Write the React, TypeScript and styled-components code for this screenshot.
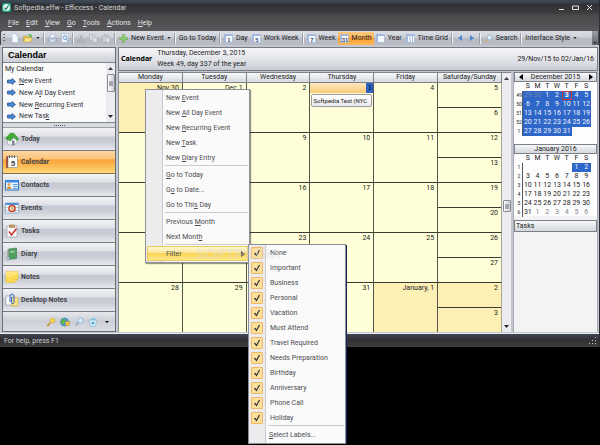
import React from 'react';
import styled, { createGlobalStyle, css } from 'styled-components';

const GlobalStyle = createGlobalStyle`
  *, *::before, *::after { box-sizing: border-box; }
  html, body { margin: 0; background: #000; }
  body { font: 7px/10px Roboto, "Liberation Sans", sans-serif; color: #1c1c24; }
  button, input { font: inherit; color: inherit; margin: 0; padding: 0; border: 0; background: none; }
  button { cursor: default; }
  svg { display: block; flex: none; }
  table { border-spacing: 0; border-collapse: separate; table-layout: fixed; width: 100%; }
  th, td { padding: 0; font-weight: 400; }
  u { text-underline-offset: 1px; text-decoration-thickness: 1px; }
`;

/* ---------- window frame ---------- */

const Desktop = styled.div`
  position: relative;
  min-height: 100vh;
  background: #000;
`;

const Window = styled.div`
  background: #48484b;
  border-right: 1px solid #2c2d33;
`;

const TitleBar = styled.header`
  display: flex;
  align-items: center;
  gap: 3px;
  height: 15px;
  padding: 0 5px 0 2px;
  color: #d5d5d5;
  background: linear-gradient(#3d4a57 0, #38424c 3px, #2f3033 4px, #37373a 10px, #454547 15px);
`;

const Title = styled.h1`
  margin: 0;
  flex: 1;
  font-size: 7px;
  font-weight: 400;
`;

const CaptionButtons = styled.div`
  display: flex;
  gap: 5px;
`;

const CaptionButton = styled.button`
  display: grid;
  place-items: center;
  width: 9px;
  height: 10px;
  color: #e4e4e4;
`;

const MenuBar = styled.nav`
  display: flex;
  gap: 7px;
  height: 16px;
  padding: 0 8px;
  align-items: center;
  color: #e2e2e2;
  background: linear-gradient(#4a4a4c, #58585a);
`;

const MenuButton = styled.button`
  line-height: 12px;
`;

const ToolBar = styled.div`
  display: flex;
  align-items: center;
  height: 14px;
  margin: 0 1px;
  padding-left: 2px;
  background: linear-gradient(#dcdee4 0, #cdd0d8 45%, #b8bbc4 50%, #b9bcc5 100%);
  border-radius: 2px 2px 0 0;
`;

const Grip = styled.span`
  width: 2px;
  height: 9px;
  margin-right: 4px;
  background: repeating-linear-gradient(#6c7078 0 1px, transparent 1px 3px);
`;

const ToolButton = styled.button<{ $active?: boolean; $roomy?: boolean }>`
  display: flex;
  align-items: center;
  gap: 3px;
  height: 13px;
  padding: 0 ${(p) => (p.$roomy ? 4 : 2)}px;
  white-space: nowrap;
  ${(p) =>
    p.$active &&
    css`
      background: linear-gradient(#fdc981, #fbb457 45%, #f99f2d 50%, #fcb85c);
    `}
`;

const Divider = styled.span`
  width: 1px;
  height: 11px;
  margin: 0 1px;
  background: #eef0f4;
  border-left: 1px solid #9a9da6;
  box-sizing: content-box;
`;

const Spacer = styled.span`
  flex: 1;
`;

const Overflow = styled.button`
  display: grid;
  place-items: end center;
  width: 6px;
  height: 14px;
  padding-bottom: 1px;
  background: linear-gradient(#9a9da6, #62656e);
`;

const Body = styled.main`
  display: flex;
  gap: 2px;
  padding: 2px 1px 1px 2px;
  background: #c3c7d0;
  border-bottom: 1px solid #e8eaee;
`;

const StatusBar = styled.footer`
  display: flex;
  align-items: center;
  justify-content: space-between;
  height: 13px;
  padding: 0 2px 0 4px;
  color: #d0d0d0;
  background: linear-gradient(#414652, #33363e 4px, #303032 6px, #3e3e40);
`;

/* ---------- sidebar ---------- */

const Sidebar = styled.aside`
  flex: none;
  display: flex;
  flex-direction: column;
  width: 114px;
  border: 1px solid #6a6d76;
  background: #fafafb;
`;

const SideHeader = styled.h2`
  margin: 0;
  height: 15px;
  padding-left: 5px;
  font: bold 9px/15px "Liberation Sans", sans-serif;
  color: #000;
  background: linear-gradient(#f6f7f8, #dcdee3 60%, #cdd0d7);
  border-bottom: 1px solid #80848c;
`;

const SideList = styled.div`
  display: flex;
  height: 60px;
  border-bottom: 1px solid #80848c;
`;

const Links = styled.div`
  flex: 1;
  display: flex;
  flex-direction: column;
  padding-left: 2px;
  overflow: hidden;
`;

const LinksTitle = styled.div`
  height: 13px;
  line-height: 12px;
`;

const SideLink = styled.a`
  display: flex;
  align-items: center;
  gap: 3px;
  height: 12px;
  padding-left: 2px;
  font-family: Roboto, "Liberation Sans", sans-serif;
  color: #33333b;
  text-decoration: none;
`;

const Scroll = styled.div`
  display: flex;
  flex-direction: column;
  align-items: center;
  width: 9px;
  padding: 4px 0;
  background: #ececf0;
`;

const Thumb = styled.span<{ $month?: boolean }>`
  width: 8px;
  height: ${(p) => (p.$month ? 12 : 18)}px;
  margin-top: ${(p) => (p.$month ? 120 : 4)}px;
  margin-bottom: auto;
  border: 1px solid #888b92;
  border-radius: 1px;
  background: linear-gradient(90deg, #fff, #c9ccd2);
  display: grid;
  place-items: center;

  &::after {
    content: "";
    width: 4px;
    height: 5px;
    background: #a4a7ae;
  }
`;

const Splitter = styled.div`
  height: 5px;
  display: grid;
  place-items: center;
  background: #d8dae0;
  border-bottom: 1px solid #9b9ea6;

  &::after {
    content: "";
    width: 11px;
    height: 1px;
    background: repeating-linear-gradient(90deg, #50535b 0 1px, transparent 1px 2px);
  }
`;

const NavButton = styled.button<{ $active?: boolean }>`
  display: flex;
  align-items: center;
  gap: 2px;
  height: 23px;
  padding-left: 2px;
  text-align: left;
  font: bold 7px/10px Roboto, "Liberation Sans", sans-serif;
  color: #43454d;
  border-bottom: 1px solid ${(p) => (p.$active ? '#8d6b3a' : '#777a83')};
  background: ${(p) =>
    p.$active
      ? 'linear-gradient(#fcd9a4 0, #fbc277 36%, #f9a53a 40%, #fcb64e 65%, #fdda80)'
      : 'linear-gradient(#f2f3f5 0, #dfe1e6 36%, #c6c9d1 42%, #cbced6 65%, #e6e8ec)'};
`;

const SideFooter = styled.div`
  display: flex;
  align-items: center;
  justify-content: flex-end;
  gap: 4px;
  flex: 1;
  min-height: 18px;
  padding-right: 3px;
  background: linear-gradient(#e6e8ec, #cbced6 50%, #dddfe4);
`;

const IconButton = styled.button`
  display: grid;
  place-items: center;
  width: 10px;
  height: 12px;
`;

/* ---------- calendar ---------- */

const Main = styled.section`
  flex: 1;
  min-width: 0;
  display: flex;
  flex-direction: column;
`;

const CalendarHeader = styled.header`
  display: flex;
  align-items: center;
  gap: 5px;
  height: 24px;
  padding: 0 3px 0 2px;
  border: 1px solid #777a83;
  background: linear-gradient(#f7f7f9, #dfe1e6 60%, #c9ccd3);
`;

const CalendarTitle = styled.h2`
  margin: 0;
  font: bold 7px/10px "Noto Sans", sans-serif;
  color: #000;
`;

const DateInfo = styled.div`
  flex: 1;
  line-height: 11px;
`;

const Columns = styled.div`
  flex: 1;
  display: flex;
  gap: 2px;
  padding-top: 1px;
`;

const MonthPane = styled.div`
  flex: 1;
  display: flex;
  border-left: 1px solid #8b8f98;
  border-top: 1px solid #80848c;
`;

const MonthTable = styled.table`
  flex: 1;
  width: 0;
`;

const DayHead = styled.th`
  height: 10px;
  line-height: 9px;
  border-right: 1px solid #7d8088;
  border-bottom: 1px solid #7d8088;
  background: linear-gradient(#f7f8f9, #d7dae0);
`;

const dayTone = { plain: '#feffd8', other: '#fcf0b4' };

const DayCell = styled.td<{ $other?: boolean }>`
  height: 50px;
  vertical-align: top;
  text-align: right;
  border-right: 1px solid #55564b;
  border-bottom: 1px solid #3a3b33;
  background: ${(p) => (p.$other ? dayTone.other : dayTone.plain)};

  &:last-child { border-right-color: #a5a79a; }
  tr:last-child > & { border-bottom: 0; height: 49px; }
`;

const DayNumber = styled.div`
  padding-right: 3px;
  line-height: 10px;
`;

const HalfDay = styled.div`
  height: 24px;
  & + & { border-top: 1px solid #3a3b33; }
`;

const TodayBar = styled.div`
  height: 10px;
  display: flex;
  justify-content: flex-end;
  line-height: 10px;
  background: linear-gradient(#fdeac0, #f9c877);
`;

const TodayNumber = styled.span`
  width: 7px;
  text-align: center;
  color: #10204c;
  background: #2f63c4;
`;

const Appointment = styled.button`
  display: block;
  width: calc(100% - 2px);
  height: 13px;
  margin: 1px 1px 0;
  padding-left: 1px;
  font-size: 6px;
  text-align: left;
  white-space: nowrap;
  border: 1px solid #9a9aa0;
  border-radius: 2px;
  background: linear-gradient(#fff, #e9e9ec);
`;

/* ---------- right pane ---------- */

const RightPane = styled.aside`
  flex: none;
  display: flex;
  flex-direction: column;
  width: 85px;
  background: #f3f3f4;
  border-right: 1px solid #a8abb3;
  border-left: 1px solid #a8abb3;
`;

const MiniMonth = styled.section`
  background: #fdfdfd;
  height: 72px;
`;

const PaneHeader = styled.h3<{ $left?: boolean }>`
  display: flex;
  align-items: center;
  justify-content: ${(p) => (p.$left ? 'flex-start' : 'space-between')};
  margin: 0;
  height: ${(p) => (p.$left ? 12 : 10)}px;
  padding: 0 ${(p) => (p.$left ? 1 : 3)}px;
  font-size: 7px;
  font-weight: 400;
  border: 1px solid #7d8088;
  background: linear-gradient(#f7f8f9, #d3d6dc);
`;

const PaneTitle = styled.span`
  flex: 1;
  text-align: center;
`;

const ArrowButton = styled.button`
  display: grid;
  place-items: center;
  width: 5px;
  height: 8px;
`;

const MiniTable = styled.table`
  line-height: 9px;
  text-align: center;
  margin: 0 6px 0 2px;
  width: calc(100% - 8px);

  tbody td, tbody th, thead th { height: 9px; }
  col:first-child { width: 7px; }
`;

const WeekNo = styled.th`
  font-size: 5px;
  border-right: 1px solid #55585f;
`;

const MiniDay = styled.td<{ $tone?: Tone }>`
  ${(p) => p.$tone === 'sel' && css`background: #2f67c9; color: #eef3ff;`}
  ${(p) => p.$tone === 'past' && css`background: #2f67c9; color: #6e85b5;`}
  ${(p) => p.$tone === 'today' && css`background: #2f67c9; color: #fff; font-weight: 700; box-shadow: inset 0 0 0 1px #c03a3c;`}
  ${(p) => p.$tone === 'dim' && css`color: #85878d;`}
`;

const TasksPane = styled.section`
  flex: 1;
  display: flex;
  flex-direction: column;
  margin-top: 4px;
`;

/* ---------- pop-up menus ---------- */

const Popup = styled.div<{ $sub?: boolean }>`
  position: absolute;
  display: flex;
  flex-direction: column;
  padding: 0 1px 1px;
  color: #4c4d52;
  border: 1px solid #8d8f94;
  background: linear-gradient(90deg, #ececee 0 16px, #c9cbd0 16px 17px, #fafafa 17px);
  ${(p) =>
    p.$sub
      ? css`left: 248px; top: 244px; width: 98px; box-shadow: 2px 0 0 -1px #12245c;`
      : css`left: 145px; top: 89px; width: 105px; box-shadow: 1px 1px 1px rgba(0, 0, 0, 0.4);`}
`;

const PopupItem = styled.button<{ $active?: boolean }>`
  display: flex;
  align-items: center;
  justify-content: space-between;
  height: 15px;
  padding: 0 3px 0 19px;
  text-align: left;
  ${(p) =>
    p.$active &&
    css`
      border: 1px solid #ecc95c;
      padding: 0 2px 0 18px;
      background: linear-gradient(#fff8d0, #fde79a 45%, #fbd453 50%, #fde98c);
    `}
`;

const PopupLine = styled.hr`
  width: calc(100% - 18px);
  height: 1px;
  margin: 0 0 1px auto;
  border: 0;
  background: #cbccd0;
`;

const CheckItem = styled.label`
  display: flex;
  align-items: center;
  gap: 7px;
  height: 15px;
  padding-left: 1px;
`;

const CheckCell = styled.span`
  display: grid;
  width: 12px;
  height: 12px;
  > * { grid-area: 1 / 1; place-self: center; }
  svg { pointer-events: none; position: relative; }
`;

const CheckInput = styled.input`
  appearance: none;
  width: 12px;
  height: 12px;
  border: 1px solid #f0b766;
  border-radius: 1px;
  background: #fde09a;
`;

const Watermark = styled.div`
  position: absolute;
  left: 195px;
  top: 246px;
  font: bold 15px/15px "Liberation Sans", sans-serif;
  color: rgba(255, 255, 255, 0.3);
  text-shadow: 0 0 1px rgba(120, 120, 110, 0.15);
  pointer-events: none;
`;

/* ---------- icons ---------- */

const Down = ({ small }: { small?: boolean }) => (
  <svg width={small ? 4 : 5} height={small ? 2 : 3} viewBox="0 0 5 3"><path d="M0 0h5L2.500 3z" fill="#26262c" /></svg>
);
const Up = () => (
  <svg width="5" height="3" viewBox="0 0 5 3"><path d="M0 3h5L2.500 0z" fill="#3a3c48" /></svg>
);
const Tri = ({ dir, color = '#000' }: { dir: 'l' | 'r'; color?: string }) => (
  <svg width="4" height="6" viewBox="0 0 4 6"><path d={dir === 'l' ? 'M4 0v6L0 3z' : 'M0 0v6l4-3z'} fill={color} /></svg>
);

const AppIcon = () => (
  <svg width="9" height="9" viewBox="0 0 18 18">
    <rect width="18" height="18" rx="3" fill="#1f9c7b" />
    <circle cx="9" cy="9" r="7" fill="#e9f7f2" />
    <path d="M5 9l3 4 5-8" fill="none" stroke="#178062" strokeWidth="2.500" />
  </svg>
);

const PageIcon = () => (
  <svg width="8" height="10" viewBox="0 0 16 20">
    <path d="M2 1h8l4 4v14H2z" fill="#f4f8ff" stroke="#a5b9d8" /><path d="M10 1v4h4" fill="#cfdcf0" stroke="#a5b9d8" />
  </svg>
);
const FolderIcon = () => (
  <svg width="10" height="10" viewBox="0 0 20 20">
    <path d="M1 6h6l2 2h7v9H1z" fill="#e6c25a" stroke="#b2913a" /><path d="M4 10h15l-4 8H1z" fill="#fbe58e" stroke="#b99a40" />
    <path d="M8 5c2-4 6-4 8-1l2-1-1 6-5-3 2-1c-1-2-3-2-6 0z" fill="#4fae3d" />
  </svg>
);
const PrintIcon = () => (
  <svg width="9" height="9" viewBox="0 0 18 18">
    <path d="M6 1h8l-2 7H4z" fill="#f8fbff" stroke="#9fb4cf" /><path d="M1 8h16v6H1z" fill="#c1cfe2" stroke="#8095b2" /><path d="M4 12h10v4H4z" fill="#eef3fa" stroke="#8ba0bd" />
  </svg>
);
const PreviewIcon = () => (
  <svg width="8" height="10" viewBox="0 0 16 20">
    <path d="M1 1h11l3 3v15H1z" fill="#eef5ff" stroke="#92aaca" /><circle cx="8" cy="9" r="4" fill="#cfe6fa" stroke="#6e8fba" strokeWidth="1.500" /><path d="M11 12l3 5" stroke="#6e8fba" strokeWidth="2" />
  </svg>
);
const CutIcon = () => (
  <svg width="8" height="9" viewBox="0 0 16 18" fill="none" stroke="#a4a7b0" strokeWidth="1.500">
    <path d="M5 1l5 10M11 1L6 11" /><circle cx="4" cy="14" r="2.500" /><circle cx="12" cy="14" r="2.500" />
  </svg>
);
const CopyIcon = () => (
  <svg width="9" height="9" viewBox="0 0 18 18" fill="#d9dbe1" stroke="#a4a7b0">
    <path d="M1 1h7l3 3v9H1z" /><path d="M7 6h6l3 3v8H7z" />
  </svg>
);
const PasteIcon = () => (
  <svg width="9" height="9" viewBox="0 0 18 18" fill="#cfd1d8" stroke="#a4a7b0">
    <path d="M1 3h13v13H1z" /><path d="M5 1h5v4H5z" /><path d="M8 8h8v9H8z" fill="#dfe1e6" />
  </svg>
);
const PlusIcon = () => (
  <svg width="9" height="9" viewBox="0 0 18 18"><path d="M7 1h4v6h6v4h-6v6H7v-6H1V7h6z" fill="#8fce72" stroke="#5da548" /></svg>
);
const ViewIcon = ({ label, bars }: { label?: string; bars?: boolean }) => (
  <svg width="9" height="9" viewBox="0 0 18 18">
    <rect x="1" y="1" width="16" height="16" fill="#f6f9ff" stroke="#8fa5cb" />
    <path d="M1 1h16v3H1zM1 1h3v16H1z" fill="#9db6de" />
    {bars && <path d="M8 4v13M13 4v13" stroke="#a9bbdc" strokeWidth="2" />}
    {label && <text x="10" y="15" textAnchor="middle" fontSize="12" fontWeight="700" fontFamily="Liberation Sans" fill="#3c5078">{label}</text>}
  </svg>
);
const SearchIcon = ({ handle = '#d6aa6c' }: { handle?: string }) => (
  <svg width="9" height="9" viewBox="0 0 18 18">
    <path d="M1 17l7-7" stroke={handle} strokeWidth="3" /><circle cx="11" cy="7" r="5" fill="#dcf0fc" stroke="#86a7c9" strokeWidth="1.500" />
  </svg>
);
const BlueArrow = () => (
  <svg width="9" height="7" viewBox="0 0 18 14"><path d="M1 4h9V1l7 6-7 6v-3H1z" fill="#4d8ad4" stroke="#1c4c90" strokeWidth="1.500" /></svg>
);

const navIcons: Record<string, React.ReactNode> = {
  Today: (<>
    <path d="M5 13v11l9 3 10-4V13z" fill="#f0f1f2" stroke="#8a9098" /><path d="M1 13L11 2l7 1 9 11-3 3-7-8-6 9z" fill="#3fae35" stroke="#1f7a20" /><path d="M14 17h5v9l-5 1z" fill="#7d8792" />
  </>),
  Calendar: (<>
    <path d="M3 4l3-2v22l-3 2z" fill="#b64a3c" stroke="#73332c" /><rect x="6" y="3" width="19" height="22" fill="#fbfbfb" stroke="#70747c" />
    <path d="M9 1v5M14 1v5M19 1v5" stroke="#555" strokeWidth="2" /><text x="16" y="21" textAnchor="middle" fontSize="15" fontWeight="700" fontFamily="Liberation Sans" fill="#3c3c42">5</text>
  </>),
  Contacts: (<>
    <rect x="1" y="5" width="26" height="19" fill="#e8f3ff" stroke="#2e77c8" strokeWidth="2" /><path d="M1 5h26v4H1z" fill="#3d8ee0" /><circle cx="8" cy="13" r="3" fill="#e2a25e" /><path d="M3 22c0-7 10-7 10 0z" fill="#d38c2c" /><path d="M16 13h9M16 17h9M16 21h9" stroke="#5a9ade" strokeWidth="2" />
  </>),
  Events: (<>
    <rect x="1" y="4" width="26" height="20" fill="#f3f8ff" stroke="#5d86bd" /><path d="M1 4h26v4H1z" fill="#4f8ed4" /><path d="M8 8v16M20 8v16M1 13h26M1 19h26" stroke="#74a6a0" /><circle cx="14" cy="15" r="6" fill="#fbe2c6" stroke="#d0452b" strokeWidth="3" /><path d="M14 12v4h3" stroke="#444" fill="none" />
  </>),
  Tasks: (<>
    <rect x="4" y="4" width="20" height="22" fill="#fafafa" stroke="#7c828c" /><path d="M9 2h10v5H9z" fill="#c9a05b" stroke="#85683a" /><path d="M8 15l5 7L23 9" fill="none" stroke="#d23030" strokeWidth="3" />
  </>),
  Diary: (<>
    <path d="M7 4l16-2v21l-16 2z" fill="#4f9e60" stroke="#2d6a3d" /><path d="M7 4l-2 2v20l2-1z" fill="#e9efe9" stroke="#6c7c70" /><path d="M11 8l8-1v4l-8 1z" fill="#9ad0a2" /><circle cx="6" cy="23" r="3" fill="#c8dbe8" stroke="#6487a0" />
  </>),
  Notes: (<>
    <path d="M2 3h24v16l-7 6H2z" fill="#fbd951" stroke="#e3b52c" /><path d="M26 19h-7v6z" fill="#fff3b2" stroke="#d9a826" /><path d="M2 3h24v5L2 16z" fill="#fde98a" opacity=".7" />
  </>),
  'Desktop Notes': (<>
    <rect x="2" y="6" width="15" height="18" fill="#f9fbff" stroke="#7a8798" /><rect x="13" y="9" width="13" height="17" fill="#fbe488" stroke="#c09c3a" /><path d="M10 18V6c0-5 8-5 8 0v13c0 3-5 3-5 0V8" fill="none" stroke="#2f62b8" strokeWidth="2" />
  </>),
};

const NavIcon = ({ name }: { name: string }) => (
  <svg width="14" height="14" viewBox="0 0 28 28">{navIcons[name]}</svg>
);

const CheckMark = () => (
  <svg width="8" height="8" viewBox="0 0 16 16"><path d="M3 8l4 5L13 2" fill="none" stroke="#33333a" strokeWidth="2.500" /></svg>
);

/* ---------- helpers and data ---------- */

const Mnemonic = ({ text }: { text: string }) => {
  const at = text.indexOf('&');
  if (at < 0) return <span>{text}</span>;
  return (
    <span>{text.slice(0, at)}<u>{text[at + 1]}</u>{text.slice(at + 2)}</span>
  );
};

type Tone = 'sel' | 'past' | 'today' | 'dim';

const menus = ['&File', '&Edit', '&View', '&Go', '&Tools', '&Actions', '&Help'];
const links = ['&New Event', 'New A&ll Day Event', 'New &Recurring Event', 'New Tas&k'];
const weekdays = ['Monday', 'Tuesday', 'Wednesday', 'Thursday', 'Friday', 'Saturday/Sunday'];
const weeks = [
  ['Nov 30', 'Dec 1', '2', '3', '4', '5', '6'],
  ['7', '8', '9', '10', '11', '12', '13'],
  ['14', '15', '16', '17', '18', '19', '20'],
  ['21', '22', '23', '24', '25', '26', '27'],
  ['28', '29', '30', '31', 'January, 1', '2', '3'],
];
const isOther = (w: number, d: number) => (w === 0 && d === 0) || (w === 4 && d > 3);

const commands = [
  ['New &Event', 'New &All Day Event', 'New &Recurring Event', 'New &Task', 'New &Diary Entry'],
  ['&Go to Today', 'G&o to Date...', 'Go to Thi&s Day'],
  ['Previous &Month', 'Next Mont&h'],
];
const filters = ['None', 'Important', 'Business', 'Personal', 'Vacation', 'Must Attend', 'Travel Required',
  'Needs Preparation', 'Birthday', 'Anniversary', 'Phone Call', 'Holiday'];

const december = {
  rows: [[29, 30, 1, 2, 3, 4, 5], [6, 7, 8, 9, 10, 11, 12], [13, 14, 15, 16, 17, 18, 19],
    [20, 21, 22, 23, 24, 25, 26], [27, 28, 29, 30, 31, 0, 0]],
  weekNos: [49, 50, 51, 52, 1],
  tone: (r: number, c: number, n: number): Tone | undefined =>
    !n ? undefined : r === 0 && c < 2 ? 'past' : r === 0 && n === 3 ? 'today' : 'sel',
};
const january = {
  rows: [[0, 0, 0, 0, 0, 1, 2], [3, 4, 5, 6, 7, 8, 9], [10, 11, 12, 13, 14, 15, 16],
    [17, 18, 19, 20, 21, 22, 23], [24, 25, 26, 27, 28, 29, 30], [31, 1, 2, 3, 4, 5, 6]],
  weekNos: [1, 2, 3, 4, 5, 6],
  tone: (r: number, c: number, n: number): Tone | undefined =>
    r === 0 && n ? 'sel' : r === 5 && c > 0 ? 'dim' : undefined,
};

const MiniCalendar = ({ data }: { data: typeof december }) => (
  <MiniTable>
    <colgroup><col />{data.rows[0].map((_, i) => <col key={i} />)}</colgroup>
    <thead>
      <tr><th />{['S', 'M', 'T', 'W', 'T', 'F', 'S'].map((d, i) => <th key={i} scope="col">{d}</th>)}</tr>
    </thead>
    <tbody>
      {data.rows.map((row, r) => (
        <tr key={r}>
          <WeekNo scope="row">{data.weekNos[r]}</WeekNo>
          {row.map((n, c) => <MiniDay key={c} $tone={data.tone(r, c, n)}>{n || ''}</MiniDay>)}
        </tr>
      ))}
    </tbody>
  </MiniTable>
);

const MonthView = () => (
  <MonthTable>
    <thead>
      <tr>{weekdays.map((d) => <DayHead key={d} scope="col">{d}</DayHead>)}</tr>
    </thead>
    <tbody>
      {weeks.map((week, w) => (
        <tr key={w}>
          {week.slice(0, 5).map((label, d) => (
            <DayCell key={d} $other={isOther(w, d)}>
              {w === 0 && d === 3 ? (
                <>
                  <TodayBar><TodayNumber>{label}</TodayNumber></TodayBar>
                  <Appointment>Softpedia Test (NYC</Appointment>
                </>
              ) : (
                <DayNumber>{label}</DayNumber>
              )}
            </DayCell>
          ))}
          <DayCell $other={isOther(w, 5)}>
            {week.slice(5).map((label) => (
              <HalfDay key={label}><DayNumber>{label}</DayNumber></HalfDay>
            ))}
          </DayCell>
        </tr>
      ))}
    </tbody>
  </MonthTable>
);

const ContextMenu = () => (
  <Popup role="menu">
    {commands.map((group, i) => (
      <React.Fragment key={i}>
        {group.map((c) => <PopupItem key={c} role="menuitem"><Mnemonic text={c} /></PopupItem>)}
        <PopupLine />
      </React.Fragment>
    ))}
    <PopupItem $active role="menuitem"><span>Filter</span><Tri dir="r" color="#4c4a3c" /></PopupItem>
  </Popup>
);

const FilterMenu = () => (
  <Popup $sub role="menu">
    {filters.map((f) => (
      <CheckItem key={f}>
        <CheckCell><CheckInput type="checkbox" defaultChecked /><CheckMark /></CheckCell>
        {f}
      </CheckItem>
    ))}
    <PopupLine />
    <PopupItem role="menuitem"><Mnemonic text="&Select Labels..." /></PopupItem>
  </Popup>
);

export default function App() {
  return (
    <Desktop>
      <GlobalStyle />
      <Window>
        <TitleBar>
          <AppIcon />
          <Title>Softpedia.effw - Efficcess - Calendar</Title>
          <CaptionButtons>
            <CaptionButton aria-label="Minimize"><svg width="5" height="6" viewBox="0 0 5 6"><path d="M0 4h5v1H0z" fill="currentColor" /></svg></CaptionButton>
            <CaptionButton aria-label="Maximize"><svg width="7" height="5" viewBox="0 0 7 5"><path d="M.5 1h6v3.500h-6z" fill="none" stroke="currentColor" /></svg></CaptionButton>
            <CaptionButton aria-label="Close"><svg width="5" height="5" viewBox="0 0 5 5"><path d="M0 0l5 5M5 0L0 5" stroke="currentColor" /></svg></CaptionButton>
          </CaptionButtons>
        </TitleBar>
        <MenuBar>
          {menus.map((m) => <MenuButton key={m}><Mnemonic text={m} /></MenuButton>)}
        </MenuBar>
        <ToolBar role="toolbar">
          <Grip />
          <ToolButton aria-label="New"><PageIcon /></ToolButton>
          <ToolButton aria-label="Open"><FolderIcon /><Down small /></ToolButton>
          <Divider />
          <ToolButton aria-label="Print"><PrintIcon /></ToolButton>
          <ToolButton aria-label="Preview"><PreviewIcon /></ToolButton>
          <Divider />
          <ToolButton aria-label="Cut"><CutIcon /></ToolButton>
          <ToolButton aria-label="Copy"><CopyIcon /></ToolButton>
          <ToolButton aria-label="Paste"><PasteIcon /></ToolButton>
          <Divider />
          <ToolButton><PlusIcon />New Event<Down small /></ToolButton>
          <Divider />
          <ToolButton>Go to Today</ToolButton>
          <Divider />
          <ToolButton><ViewIcon label="1" />Day</ToolButton>
          <ToolButton><ViewIcon label="5" />Work Week</ToolButton>
          <Divider />
          <ToolButton><ViewIcon label="7" />Week</ToolButton>
          <ToolButton $active><ViewIcon label="31" />Month</ToolButton>
          <ToolButton><ViewIcon />Year</ToolButton>
          <ToolButton><ViewIcon bars />Time Grid</ToolButton>
          <Divider />
          <ToolButton $roomy aria-label="Back"><Tri dir="l" color="#4e86d6" /></ToolButton>
          <ToolButton $roomy aria-label="Forward"><Tri dir="r" color="#4e86d6" /></ToolButton>
          <Divider />
          <ToolButton><SearchIcon />Search</ToolButton>
          <Divider />
          <ToolButton>Interface Style<Down small /></ToolButton>
          <Spacer />
          <Overflow aria-label="Toolbar options"><Down small /></Overflow>
        </ToolBar>
        <Body>
          <Sidebar>
            <SideHeader>Calendar</SideHeader>
            <SideList>
              <Links>
                <LinksTitle>My Calendar</LinksTitle>
                {links.map((l) => <SideLink key={l} href="#"><BlueArrow /><Mnemonic text={l} /></SideLink>)}
              </Links>
              <Scroll><Up /><Thumb /><Down /></Scroll>
            </SideList>
            <Splitter />
            {Object.keys(navIcons).map((n) => (
              <NavButton key={n} $active={n === 'Calendar'}><NavIcon name={n} />{n}</NavButton>
            ))}
            <SideFooter>
              <IconButton aria-label="Password">
                <svg width="10" height="10" viewBox="0 0 20 20"><path d="M9 11l-7 7M4 16l2 2" stroke="#c39a2c" strokeWidth="3" /><circle cx="13" cy="7" r="5" fill="#f7d65c" stroke="#b98f24" /></svg>
              </IconButton>
              <IconButton aria-label="Web">
                <svg width="10" height="10" viewBox="0 0 20 20"><circle cx="9" cy="10" r="8" fill="#4d9edb" stroke="#2d6ca8" /><path d="M4 5c4-3 8-1 7 2s-4 3-3 7-5-1-6-4z" fill="#62b83d" /><rect x="11" y="9" width="8" height="8" fill="#f2c84b" stroke="#a5802a" /></svg>
              </IconButton>
              <IconButton aria-label="Find"><SearchIcon handle="#8aa5c4" /></IconButton>
              <IconButton aria-label="Recycle">
                <svg width="10" height="10" viewBox="0 0 20 20"><path d="M3 6h14l-2 13H5z" fill="#cfeaf8" stroke="#6ea9cc" /><path d="M6 6l5-4 5 4" fill="#8fd0e8" stroke="#3f9cc0" /><path d="M7 13l3-4 3 4-3 2z" fill="#2c9db0" /></svg>
              </IconButton>
              <IconButton aria-label="More"><svg width="4" height="2" viewBox="0 0 4 2"><path d="M0 0h4L2 2z" /></svg></IconButton>
            </SideFooter>
          </Sidebar>
          <Main>
            <CalendarHeader>
              <CalendarTitle>Calendar</CalendarTitle>
              <DateInfo>Thursday, December 3, 2015<br />Week 49, day 337 of the year</DateInfo>
              <span>29/Nov/15 to 02/Jan/16</span>
            </CalendarHeader>
            <Columns>
              <MonthPane>
                <MonthView />
                <Scroll><Up /><Thumb $month /><Down /></Scroll>
              </MonthPane>
              <RightPane>
                <MiniMonth>
                  <PaneHeader>
                    <ArrowButton aria-label="Previous month"><Tri dir="l" /></ArrowButton>
                    <PaneTitle>December 2015</PaneTitle>
                    <ArrowButton aria-label="Next month"><Tri dir="r" /></ArrowButton>
                  </PaneHeader>
                  <MiniCalendar data={december} />
                </MiniMonth>
                <MiniMonth>
                  <PaneHeader><PaneTitle>January 2016</PaneTitle></PaneHeader>
                  <MiniCalendar data={january} />
                </MiniMonth>
                <TasksPane><PaneHeader $left>Tasks</PaneHeader></TasksPane>
              </RightPane>
            </Columns>
          </Main>
        </Body>
        <StatusBar>
          <span>For help, press F1</span>
          <svg width="8" height="8" viewBox="0 0 8 8" fill="#c8c8c8"><path d="M6 0h1v1H6zM6 3h1v1H6zM6 6h1v1H6zM3 3h1v1H3zM3 6h1v1H3zM0 6h1v1H0z" /></svg>
        </StatusBar>
      </Window>
      <ContextMenu />
      <FilterMenu />
      <Watermark>SOFTPEDIA</Watermark>
    </Desktop>
  );
}
